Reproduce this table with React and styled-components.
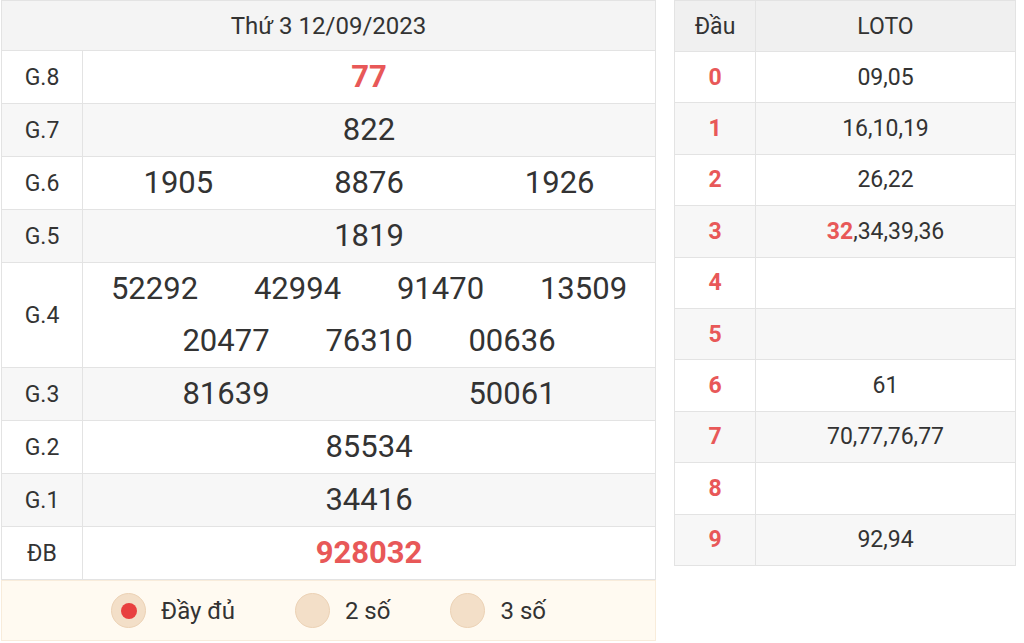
import React from "react";
import styled, { createGlobalStyle } from "styled-components";

const Global = createGlobalStyle`
  html, body { margin: 0; padding: 0; background: #fff; }
  body { font-family: Roboto, "Noto Sans", "Liberation Sans", sans-serif; color: #333; }
  * { box-sizing: border-box; }
`;

const Page = styled.div`
  display: flex;
  align-items: flex-start;
  gap: 18px;
  padding: 0 0 0 1px;
  width: 1024px;
`;

const ResultTable = styled.div`
  width: 655px;
  border: 1px solid #e3e3e3;
  border-bottom: none;
  display: flex;
  flex-direction: column;
`;

const Caption = styled.div`
  height: 50px;
  display: flex;
  align-items: center;
  justify-content: center;
  background: #f4f4f4;
  border-bottom: 1px solid #e3e3e3;
  font-size: 24px;
  color: #333;
`;

const PrizeRow = styled.div`
  display: grid;
  grid-template-columns: 81px 1fr;
  min-height: 53px;
  background: ${(p) => (p.$striped ? "#f7f7f7" : "#fff")};
  border-bottom: 1px solid #e3e3e3;
`;

const Label = styled.div`
  display: flex;
  align-items: center;
  justify-content: center;
  border-right: 1px solid #e3e3e3;
  font-size: 23px;
  color: #333;
`;

const Values = styled.div`
  display: flex;
  flex-wrap: wrap;
  justify-content: center;
  align-content: center;
`;

const Num = styled.div`
  width: ${(p) => p.$w};
  text-align: center;
  font-size: 31px;
  line-height: 52px;
  font-weight: ${(p) => (p.$red ? 700 : 400)};
  color: ${(p) => (p.$red ? "#e85858" : "#333")};
`;

const RadioRow = styled.div`
  height: 61px;
  display: flex;
  align-items: center;
  justify-content: center;
  gap: 60px;
  background: #fffaf1;
  border: 1px solid #f8ecdb;
  margin: 0 -1px;
`;

const RadioItem = styled.label`
  display: flex;
  align-items: center;
  gap: 15px;
  font-size: 24px;
  color: #333;
  cursor: pointer;
`;

const Circle = styled.span`
  width: 35px;
  height: 35px;
  border-radius: 50%;
  background: #f3dfc8;
  border: 1px solid #ecd2b5;
  display: flex;
  align-items: center;
  justify-content: center;
  &::after {
    content: "";
    display: ${(p) => (p.$on ? "block" : "none")};
    width: 16px;
    height: 16px;
    border-radius: 50%;
    background: #e8403f;
  }
`;

const LotoTable = styled.div`
  width: 342px;
  border: 1px solid #e3e3e3;
  border-bottom: none;
  display: flex;
  flex-direction: column;
`;

const LotoRow = styled.div`
  display: grid;
  grid-template-columns: 81px 1fr;
  height: ${(p) => (p.$head ? "51px" : "51.4px")};
  background: ${(p) => (p.$head ? "#f0f0f0" : p.$striped ? "#f7f7f7" : "#fff")};
  border-bottom: 1px solid #e3e3e3;
`;

const LotoCell = styled.div`
  display: flex;
  align-items: center;
  justify-content: center;
  font-size: 23px;
  color: #333;
  border-right: ${(p) => (p.$first ? "1px solid #e3e3e3" : "none")};
`;

const Head = styled(LotoCell)`
  font-weight: 700;
  color: #e85858;
`;

const Red = styled.span`
  font-weight: 700;
  color: #e85858;
`;

const prizes = [
  { label: "G.8", nums: ["77"], red: true },
  { label: "G.7", nums: ["822"] },
  { label: "G.6", nums: ["1905", "8876", "1926"] },
  { label: "G.5", nums: ["1819"] },
  { label: "G.4", nums: ["52292", "42994", "91470", "13509", "20477", "76310", "00636"], w: "25%" },
  { label: "G.3", nums: ["81639", "50061"] },
  { label: "G.2", nums: ["85534"] },
  { label: "G.1", nums: ["34416"] },
  { label: "ĐB", nums: ["928032"], red: true },
];

const loto = [
  ["0", "09,05"],
  ["1", "16,10,19"],
  ["2", "26,22"],
  ["3", null],
  ["4", ""],
  ["5", ""],
  ["6", "61"],
  ["7", "70,77,76,77"],
  ["8", ""],
  ["9", "92,94"],
];

export default function App() {
  return (
    <>
      <Global />
      <Page>
        <ResultTable>
          <Caption>Thứ 3 12/09/2023</Caption>
          {prizes.map((p, i) => {
            const w = p.w || `${100 / p.nums.length}%`;
            return (
              <PrizeRow key={p.label} $striped={i % 2 === 1}>
                <Label>{p.label}</Label>
                <Values>
                  {p.nums.map((n, j) => (
                    <Num key={j} $w={w} $red={p.red}>
                      {n}
                    </Num>
                  ))}
                </Values>
              </PrizeRow>
            );
          })}
          <RadioRow>
            <RadioItem>
              <Circle $on />
              Đầy đủ
            </RadioItem>
            <RadioItem>
              <Circle />2 số
            </RadioItem>
            <RadioItem>
              <Circle />3 số
            </RadioItem>
          </RadioRow>
        </ResultTable>
        <LotoTable>
          <LotoRow $head>
            <LotoCell $first>Đầu</LotoCell>
            <LotoCell>LOTO</LotoCell>
          </LotoRow>
          {loto.map(([d, v], i) => (
            <LotoRow key={d} $striped={i % 2 === 1}>
              <Head $first>{d}</Head>
              <LotoCell>
                {v === null ? (
                  <>
                    <Red>32</Red>,34,39,36
                  </>
                ) : (
                  v
                )}
              </LotoCell>
            </LotoRow>
          ))}
        </LotoTable>
      </Page>
    </>
  );
}
